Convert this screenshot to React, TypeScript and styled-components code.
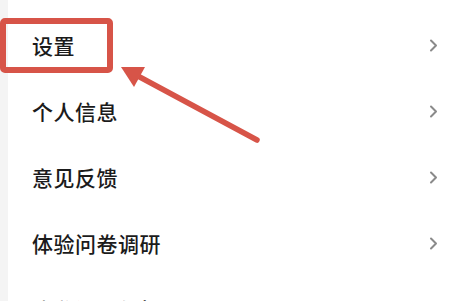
import React from "react";
import styled, { createGlobalStyle } from "styled-components";

const GlobalStyle = createGlobalStyle`
  html, body {
    margin: 0;
    padding: 0;
    background: #ffffff;
  }
  body {
    font-family: "Noto Sans CJK SC", "Noto Sans", sans-serif;
    overflow: hidden;
  }
`;

const items = ["设置", "个人信息", "意见反馈", "体验问卷调研", "隐私设置与权限"];

const Page = styled.div`
  position: relative;
  width: 465px;
  height: 301px;
  overflow: hidden;
  display: flex;
  background: #ffffff;
`;

const SideStrip = styled.div`
  width: 8px;
  flex-shrink: 0;
  background: #f4f4f4;
`;

const List = styled.ul`
  list-style: none;
  margin: 0;
  padding: 12px 0 0 0;
  flex: 1;
  display: flex;
  flex-direction: column;
`;

const Row = styled.li`
  height: 66px;
  flex-shrink: 0;
  display: flex;
  align-items: center;
  justify-content: space-between;
  padding: 0 27px 0 24px;
`;

const Label = styled.span`
  font-size: 21px;
  font-weight: 500;
  color: #1b1b1b;
  letter-spacing: 0.5px;
`;

const Chevron = styled.svg`
  width: 9px;
  height: 13px;
  display: block;
`;

const Highlight = styled.div`
  position: absolute;
  left: 0;
  top: 18px;
  width: 113px;
  height: 55px;
  box-sizing: border-box;
  border: 6px solid #d75448;
  border-radius: 5px;
`;

const ArrowLayer = styled.svg`
  position: absolute;
  left: 0;
  top: 0;
  width: 465px;
  height: 301px;
  pointer-events: none;
`;

export default function App() {
  return (
    <>
      <GlobalStyle />
      <Page>
        <SideStrip />
        <List>
          {items.map((t) => (
            <Row key={t}>
              <Label>{t}</Label>
              <Chevron viewBox="0 0 9 13">
                <path d="M2 1.5 L7 6.5 L2 11.5" fill="none" stroke="#8a8a8a" strokeWidth="2" strokeLinecap="round" strokeLinejoin="round" />
              </Chevron>
            </Row>
          ))}
        </List>
        <Highlight />
        <ArrowLayer viewBox="0 0 465 301">
          <line x1="257" y1="140" x2="136" y2="75" stroke="#d75448" strokeWidth="5.5" strokeLinecap="round" />
          <polygon points="121,67 145,67 134,87" fill="#d75448" />
        </ArrowLayer>
      </Page>
    </>
  );
}
